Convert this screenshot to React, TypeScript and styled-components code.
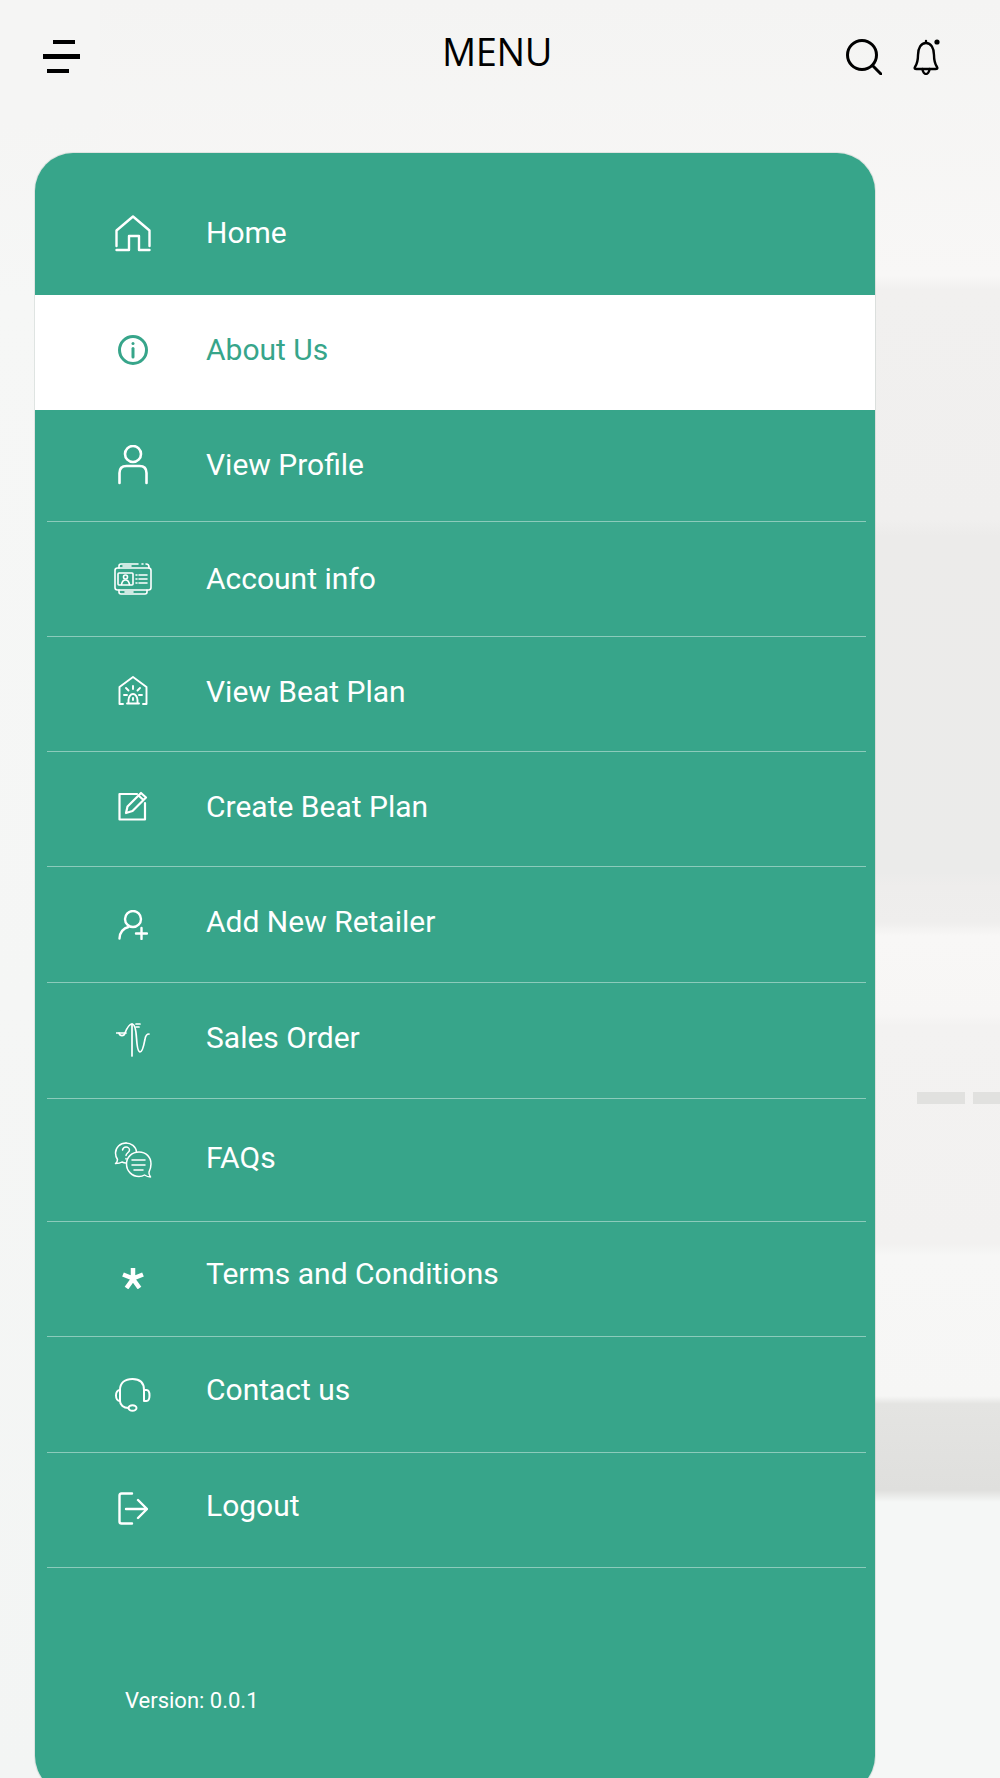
import React from 'react'
import styled, { createGlobalStyle } from 'styled-components'

const teal = '#37a58a'

const GlobalStyle = createGlobalStyle`
  html, body {
    margin: 0;
    padding: 0;
    background: #f4f4f3;
  }
  * {
    box-sizing: border-box;
  }
`

const Page = styled.div`
  width: 1000px;
  height: 1778px;
  overflow: hidden;
  font-family: Roboto, 'Liberation Sans', sans-serif;
  background-color: #f4f4f3;
  background-image:
    linear-gradient(#e1e1df, #e1e1df),
    linear-gradient(#e1e1df, #e1e1df),
    linear-gradient(180deg, #f5f5f4 0, #f5f5f4 120px, #f6f7f6 300px, #f5f6f5 1000px, #f3f5f4 1778px),
    linear-gradient(
      180deg,
      #f4f4f3 0,
      #f8f7f6 276px,
      #f1f0ef 290px,
      #f0efee 520px,
      #ecebea 536px,
      #ebebea 872px,
      #eeedec 886px,
      #efeeed 922px,
      #f8f7f6 936px,
      #f7f6f5 1014px,
      #f3f2f1 1026px,
      #f2f1f0 1244px,
      #f7f7f6 1256px,
      #f6f6f5 1396px,
      #e4e4e2 1404px,
      #dfdfdd 1490px,
      #f5f7f6 1502px,
      #f5f7f6 100%
    );
  background-size: 48px 12px, 27px 12px, 100px 100%, 100% 100%;
  background-position: 917px 1092px, 973px 1092px, 0 0, 0 0;
  background-repeat: no-repeat;
`

const Header = styled.header`
  height: 113px;
  padding: 0 57px 0 42px;
  display: grid;
  grid-template-columns: 1fr auto 1fr;
  align-items: center;
  color: #000;
`

const Title = styled.h1`
  margin: 0;
  padding: 0 0 12px 9px;
  font-family: 'Open Sans', sans-serif;
  font-size: 38px;
  line-height: 44px;
  font-weight: 400;
  letter-spacing: -0.4px;
`

const HeaderActions = styled.div`
  display: flex;
  justify-content: flex-end;
  align-items: center;
  gap: 29px;
`

const Panel = styled.nav`
  margin: 40px 0 0 35px;
  width: 840px;
  height: 1641px;
  padding-top: 18px;
  background: ${teal};
  border-radius: 38px;
  box-shadow: 0 0 0 1px rgba(170, 185, 180, 0.3);
  display: flex;
  flex-direction: column;
  overflow: hidden;
`

const Row = styled.a<{ $h: number; $active?: boolean }>`
  height: ${(p) => p.$h}px;
  flex: none;
  display: grid;
  grid-template-columns: 72px 1fr;
  column-gap: 37px;
  align-items: center;
  padding-left: 62px;
  background: ${(p) => (p.$active ? '#fff' : 'transparent')};
  color: ${(p) => (p.$active ? teal : '#fff')};
`

const IconSlot = styled.span<{ $lift: number }>`
  display: flex;
  justify-content: center;
  align-items: center;
  padding-bottom: ${(p) => p.$lift}px;
`

const Label = styled.span<{ $lift: number }>`
  font-size: 30px;
  line-height: 36px;
  font-weight: 400;
  padding-bottom: ${(p) => p.$lift}px;
`

const Divider = styled.div`
  flex: none;
  height: 1px;
  margin: 0 9px 0 12px;
  background: rgba(255, 255, 255, 0.42);
`

const Version = styled.div`
  margin-top: 118px;
  padding-left: 90px;
  color: #fff;
  font-size: 22px;
  line-height: 30px;
`

const stroke = {
  fill: 'none',
  stroke: 'currentColor',
  strokeWidth: 2,
  strokeLinecap: 'round' as const,
  strokeLinejoin: 'round' as const,
}

const MenuBars = () => (
  <svg width="38" height="33" viewBox="0 0 38 33" fill="#000">
    <rect x="11" y="0" width="22" height="4" />
    <rect x="1" y="14" width="37" height="5" />
    <rect x="5" y="29" width="22" height="4" />
  </svg>
)

const SearchIcon = () => (
  <svg width="36" height="36" viewBox="0 0 36 36" {...stroke} strokeWidth={3}>
    <circle cx="16" cy="16" r="14.5" />
    <path d="M26.5 26.5 35 35" />
  </svg>
)

const BellIcon = () => (
  <svg width="32" height="36" viewBox="0 0 32 36" {...stroke} strokeWidth={2.4}>
    <path d="M15 4V2M4 28c2-3 3-5 3-12 0-7 3-12 8-12 5 0 8 5 8 12 0 7 1 9 3 12 1 1.5 0 2-1.5 2H5.5C4 30 3 29.5 4 28Z" />
    <path d="M11.5 30c0 3 2 5 3.5 5s3.5-2 3.5-5" />
    <circle cx="26" cy="3" r="2.6" fill="currentColor" stroke="none" />
  </svg>
)

const HomeIcon = () => (
  <svg width="36" height="37" viewBox="0 0 36 37" {...stroke} strokeWidth={2.4}>
    <path d="M1.5 31V15.5L18 1.500l16.500 14V31" />
    <path d="M1.5 35H14V21h10v14h10.500" />
  </svg>
)

const InfoIcon = () => (
  <svg width="32" height="32" viewBox="0 0 32 32" {...stroke} strokeWidth={3}>
    <circle cx="16" cy="16" r="13.5" />
    <path d="M16 14.5V23" />
    <circle cx="16" cy="9.5" r="1.5" fill="currentColor" stroke="none" />
  </svg>
)

const ProfileIcon = () => (
  <svg width="30" height="40" viewBox="0 0 30 40" {...stroke} strokeWidth={2.6}>
    <circle cx="15" cy="9" r="8" />
    <path d="M1.5 38V28c0-5 3-7 7-7h13c4 0 7 2 7 7v10" />
  </svg>
)

const AccountIcon = () => (
  <svg width="38" height="32" viewBox="0 0 38 32" {...stroke} strokeWidth={1.6}>
    <rect x="1" y="5" width="36" height="22" rx="2.5" />
    <path d="M5 5V3c0-1 1-2 2-2h17M28 1h1M32 1c2 0 3 1 3 3v1M5 27v2c0 1 1 2 2 2h24c1 0 2-1 2-2v-2" />
    <path d="M9 3h8M11 29h8" />
    <rect x="4" y="10" width="15" height="12" rx="1" />
    <circle cx="11.5" cy="14" r="2" />
    <path d="M7.5 21.5c.5-3 2-4.500 4-4.500s3.500 1.500 4 4.500" />
    <path d="M22 12h1M25 12h8M22 16h1M25 16h8M22 20h1M25 20h8" />
  </svg>
)

const BeatIcon = () => (
  <svg width="30" height="30" viewBox="0 0 30 30" {...stroke} strokeWidth={1.9}>
    <path d="M5 28H1.500V11L15 1 28.500 11v17H25" />
    <path d="M9 27.500h12M10.500 27v-3c0-3 2-6 4.500-6s4.500 3 4.500 6v3" />
    <path d="M15 22v2M15 10v3M8 12l2.500 2.500M22 12l-2.500 2.500M6 19h3M21 19h3" />
  </svg>
)

const EditIcon = () => (
  <svg width="30" height="30" viewBox="0 0 30 30" {...stroke} strokeWidth={2.2}>
    <path d="M19 3H1.500v25.500h25.500V12" />
    <path d="M8 22l1.500-6.500L23 2l5 4.500L14.500 20 8 22ZM20.500 4.500l5 4.500" />
  </svg>
)

const AddUserIcon = () => (
  <svg width="30" height="30" viewBox="0 0 30 30" {...stroke} strokeWidth={2.4}>
    <circle cx="15" cy="9" r="8" />
    <path d="M1.500 28.500c0-6 4-10.500 9-11.500" />
    <path d="M18 23.500h11M23.500 18v11" />
  </svg>
)

const SalesIcon = () => (
  <svg width="34" height="34" viewBox="0 0 34 34" {...stroke} strokeWidth={1.7}>
    <path d="M16 1v32M0.500 10H10" />
    <path d="M3 10c1 3.500 5 3.500 6 0C11 5 13 1 16 1c3 0 4 6 4.500 14 .5 8 1.500 14 3.500 14 3 0 4-8 5-13 .5-3 2-5 4-5" />
    <path d="M20 1h4M20 4h3" />
  </svg>
)

const FaqIcon = () => (
  <svg width="38" height="37" viewBox="0 0 38 37" {...stroke} strokeWidth={1.5}>
    <path d="M12 1C6 1 1.500 5.500 1.500 11c0 2.500 1 5 2 6.500 0 1.500-.5 3-2 4 3 0 5-.5 6.500-1.500 1 .5 2.500 1 4 1" />
    <path d="M12 1c5 0 10 3.500 10.500 9" />
    <path d="M8.500 8c.5-2 2-3 3.500-3 2 0 3.500 1.500 3.500 3 0 2.500-3.500 3-3.500 5.500M12 16.500v.5" />
    <path d="M25 10c-7 0-12.500 5-12.500 12S18 34.500 25 34.500c2 0 4-.5 5.500-1.500 1.500 1 3.500 2 6 2-1-1.500-2-3-1.500-5 1-2 2-4.500 2-8 0-7-5-12-12-12Z" />
    <path d="M18 18h13M18 23h13M20 28h9" strokeWidth={1.5} />
  </svg>
)

const TermsIcon = () => (
  <svg width="22" height="22" viewBox="0 0 22 22" {...stroke} strokeWidth={4.5} strokeLinecap="butt">
    <path d="M11 1v12M1 7.500l10 4 10-4M4.500 21 11 12l6.500 9" />
  </svg>
)

const ContactIcon = () => (
  <svg width="36" height="34" viewBox="0 0 36 34" {...stroke} strokeWidth={2}>
    <path d="M5 12C5 5 10 1 17.500 1S29 5 29 12" />
    <path d="M5 12c-2.500 0-4 2.500-4 5.500S2.500 23 5 23V12ZM29 12h2.500c2 0 3 2.500 3 5.500S33.500 23 31.500 23H29V12Z" />
    <path d="M5 23c0 4 3.500 7 8.500 7" />
    <ellipse cx="17.500" cy="30" rx="4" ry="2.800" />
  </svg>
)

const LogoutIcon = () => (
  <svg width="30" height="34" viewBox="0 0 30 34" {...stroke} strokeWidth={2.4}>
    <path d="M14 1.500H3.500c-1.500 0-2 1-2 2v26c0 1 .5 2 2 2H14" />
    <path d="M8 17h21M20 8l9 9-9 9" />
  </svg>
)

const items = [
  { label: 'Home', h: 124, icon: <HomeIcon />, active: false, line: false, iconLift: 0, textLift: 1 },
  { label: 'About Us', h: 115, icon: <InfoIcon />, active: true, line: false, iconLift: 6, textLift: 5 },
  { label: 'View Profile', h: 111, icon: <ProfileIcon />, active: false, line: true, iconLift: 2, textLift: 1 },
  { label: 'Account info', h: 114, icon: <AccountIcon />, active: false, line: true, iconLift: 0, textLift: 1 },
  { label: 'View Beat Plan', h: 114, icon: <BeatIcon />, active: false, line: true, iconLift: 6, textLift: 5 },
  { label: 'Create Beat Plan', h: 114, icon: <EditIcon />, active: false, line: true, iconLift: 6, textLift: 5 },
  { label: 'Add New Retailer', h: 115, icon: <AddUserIcon />, active: false, line: true, iconLift: 0, textLift: 5 },
  { label: 'Sales Order', h: 115, icon: <SalesIcon />, active: false, line: true, iconLift: 2, textLift: 5 },
  { label: 'FAQs', h: 122, icon: <FaqIcon />, active: false, line: true, iconLift: 0, textLift: 5 },
  { label: 'Terms and Conditions', h: 114, icon: <TermsIcon />, active: false, line: true, iconLift: 3, textLift: 10 },
  { label: 'Contact us', h: 115, icon: <ContactIcon />, active: false, line: true, iconLift: 0, textLift: 10 },
  { label: 'Logout', h: 114, icon: <LogoutIcon />, active: false, line: true, iconLift: 2, textLift: 9 },
]

export default function App() {
  return (
    <Page>
      <GlobalStyle />
      <Header>
        <MenuBars />
        <Title>MENU</Title>
        <HeaderActions>
          <SearchIcon />
          <BellIcon />
        </HeaderActions>
      </Header>
      <Panel>
        {items.map((item) => (
          <React.Fragment key={item.label}>
            <Row $h={item.h} $active={item.active}>
              <IconSlot $lift={item.iconLift}>{item.icon}</IconSlot>
              <Label $lift={item.textLift}>{item.label}</Label>
            </Row>
            {item.line && <Divider />}
          </React.Fragment>
        ))}
        <Version>Version: 0.0.1</Version>
      </Panel>
    </Page>
  )
}
